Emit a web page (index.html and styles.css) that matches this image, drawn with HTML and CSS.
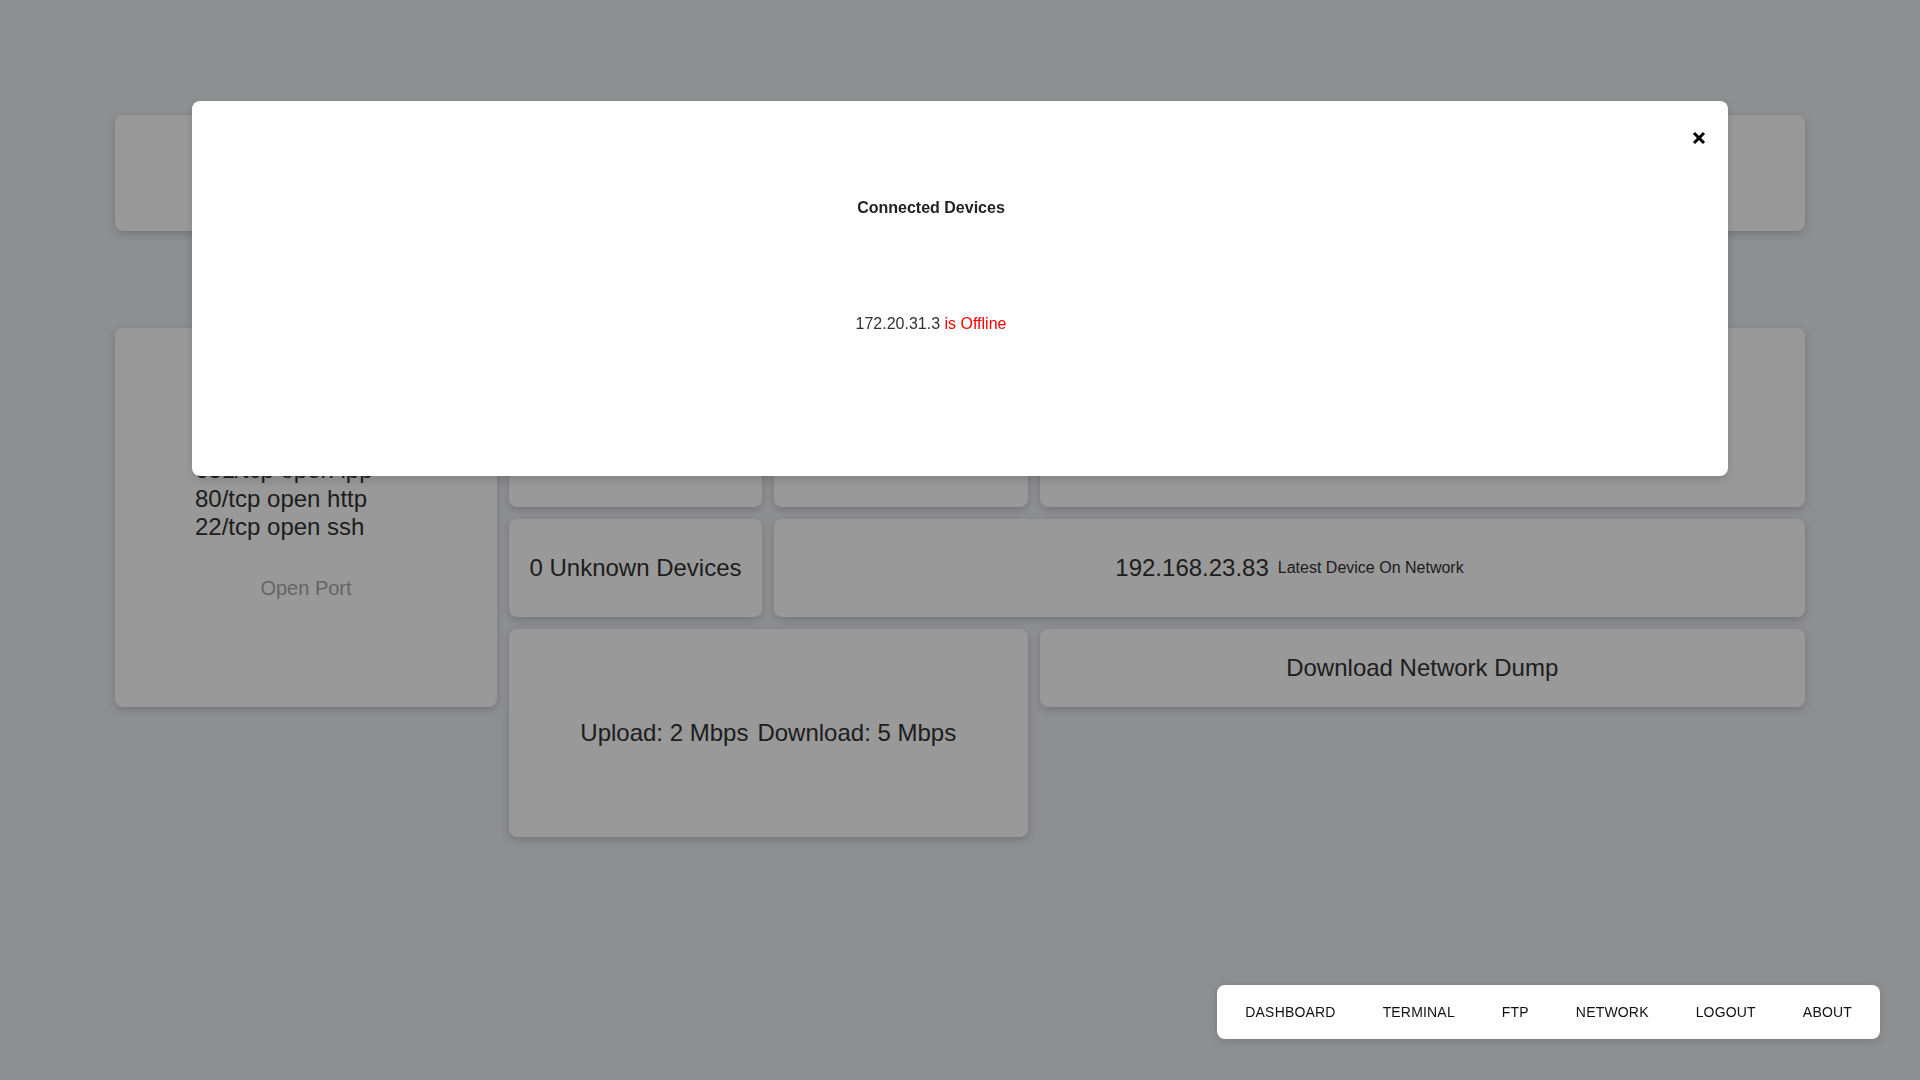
FILE: index.html
```html
<!DOCTYPE html>
<html lang="en">
<head>
<meta charset="utf-8">
<title>Dashboard</title>
<link rel="stylesheet" href="styles.css">
</head>
<body>
<main class="page">
  <section class="card top-card">
    <div class="top-title">Network Overview</div>
  </section>

  <div class="dash">
    <section class="card ports-card">
      <ul class="ports">
        <li>631/tcp open ipp</li>
        <li>80/tcp open http</li>
        <li>22/tcp open ssh</li>
      </ul>
      <div class="ports-label">Open Port</div>
    </section>

    <div class="grid">
      <section class="card stat r1"><span class="big">12</span></section>
      <section class="card stat r1"><span class="big">3</span></section>
      <section class="card stat r1"><span class="big">Network Status</span></section>

      <section class="card stat r2"><span class="big">0 Unknown Devices</span></section>
      <section class="card stat r2 span2">
        <span class="big">192.168.23.83</span><span class="small">Latest Device On Network</span>
      </section>

      <section class="card stat speed span2-cols">
        <span class="big">Upload: 2 Mbps</span><span class="big">Download: 5 Mbps</span>
      </section>
      <section class="card stat dump"><span class="big">Download Network Dump</span></section>
    </div>
  </div>
</main>

<div class="overlay"></div>

<div class="modal">
  <div class="modal-body">
    <div class="modal-title">Connected Devices</div>
    <div class="device">172.20.31.3 <span class="offline">is Offline</span></div>
  </div>
  <div class="modal-side">
    <button class="close" aria-label="Close">
      <svg width="14" height="14" viewBox="0 0 14 14"><path d="M2 2 L12 12 M12 2 L2 12" stroke="#000" stroke-width="3" fill="none"/></svg>
    </button>
  </div>
</div>

<nav class="nav">
  <a class="nav-item">DASHBOARD</a>
  <a class="nav-item">TERMINAL</a>
  <a class="nav-item">FTP</a>
  <a class="nav-item">NETWORK</a>
  <a class="nav-item">LOGOUT</a>
  <a class="nav-item">ABOUT</a>
</nav>
</body>
</html>
```

FILE: styles.css
```css
* { box-sizing: border-box; }

html, body {
  margin: 0;
  padding: 0;
  height: 100%;
}

body {
  background: #edeef2;
  font-family: "Liberation Sans", Arial, sans-serif;
  color: #333;
  overflow: hidden;
}

.page {
  padding: 115px 115px 0 115px;
}

.card {
  background: #fff;
  border-radius: 8px;
  box-shadow: 0 3px 8px rgba(0, 0, 0, 0.18);
}

.top-card {
  height: 116px;
  display: flex;
  align-items: center;
  justify-content: center;
  font-size: 24px;
}

.dash {
  display: flex;
  align-items: flex-start;
  gap: 12px;
  margin-top: 97px;
}

.ports-card {
  width: 382px;
  height: 379px;
  flex: none;
  padding-top: 128px;
}

.ports {
  list-style: none;
  margin: 0;
  padding: 0 0 0 80px;
  font-size: 24px;
  line-height: 28.5px;
  color: #333;
}

.ports-label {
  margin-top: 35px;
  text-align: center;
  font-size: 20px;
  line-height: 23px;
  color: #a8a8a8;
}

.grid {
  flex: 1;
  display: grid;
  grid-template-columns: 253px 253.5px 1fr;
  grid-template-rows: 179px 98px auto;
  column-gap: 12px;
  row-gap: 12px;
  align-items: start;
}

.stat {
  display: flex;
  align-items: center;
  justify-content: center;
  gap: 9px;
  color: #333;
}

.r1 { height: 179px; }
.r2 { height: 98px; }
.span2 { grid-column: 2 / 4; }
.span2-cols { grid-column: 1 / 3; height: 208px; }
.dump { height: 78px; }

.big {
  font-size: 24px;
  line-height: 28px;
}

.small {
  font-size: 16px;
  line-height: 18px;
}

.overlay {
  position: fixed;
  inset: 0;
  background: rgba(0, 0, 0, 0.4);
  z-index: 10;
}

.modal {
  position: fixed;
  top: 101px;
  left: 10%;
  width: 80%;
  height: 375px;
  background: #fff;
  border-radius: 8px;
  box-shadow: 0 4px 12px rgba(0, 0, 0, 0.15);
  z-index: 20;
  display: flex;
}

.modal-body {
  flex: 1;
  padding-top: 98px;
  text-align: center;
  font-size: 16px;
  line-height: 18px;
}

.modal-title {
  font-weight: bold;
  color: #222;
}

.device {
  margin-top: 98px;
  color: #333;
}

.offline {
  color: #ff0000;
}

.modal-side {
  width: 58px;
  flex: none;
  padding-top: 30px;
  display: flex;
  justify-content: center;
}

.close {
  border: 0;
  background: none;
  padding: 0;
  width: 14px;
  height: 14px;
  cursor: pointer;
  display: block;
}

.close svg { display: block; }

.nav {
  position: fixed;
  right: 40px;
  bottom: 41px;
  height: 54px;
  background: #fff;
  border-radius: 8px;
  box-shadow: 0 2px 8px rgba(0, 0, 0, 0.15);
  z-index: 30;
  display: flex;
  align-items: center;
  padding: 0 4.5px;
}

.nav-item {
  padding: 0 23.5px;
  font-size: 14px;
  letter-spacing: 0.18px;
  color: #111;
  text-decoration: none;
  cursor: pointer;
}
```
